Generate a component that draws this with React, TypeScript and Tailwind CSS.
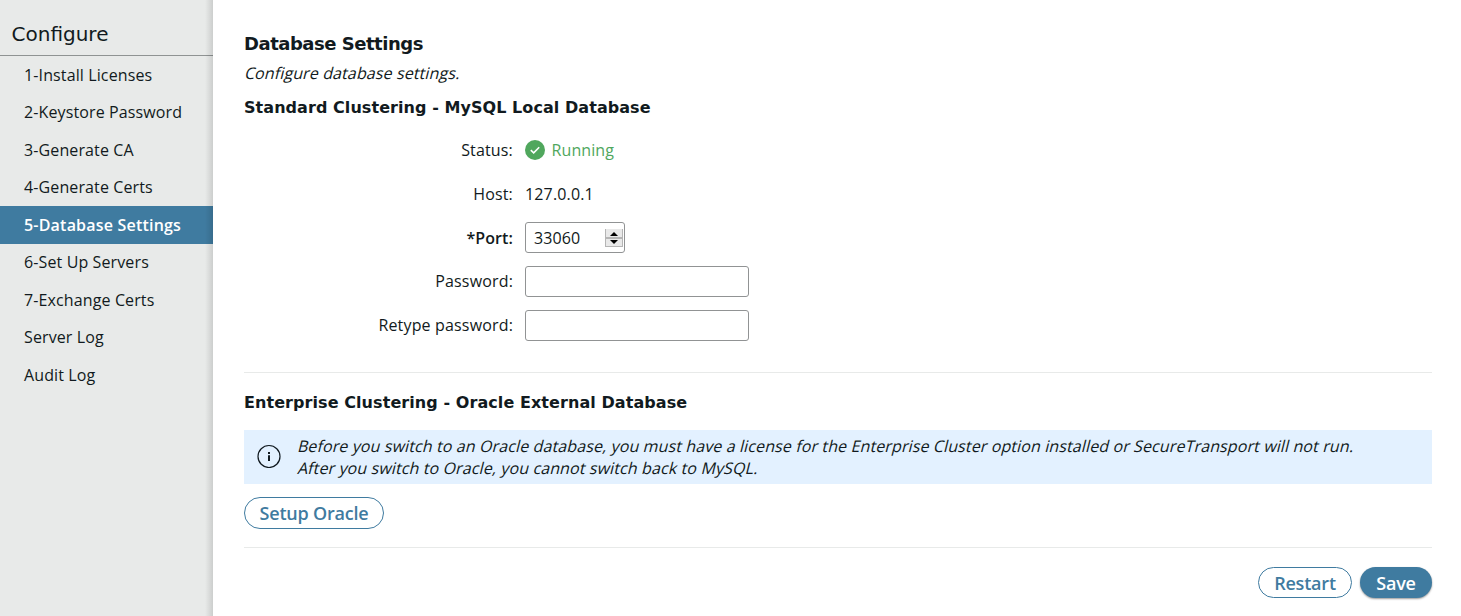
import React from "react";

const navItems = [
  "1-Install Licenses",
  "2-Keystore Password",
  "3-Generate CA",
  "4-Generate Certs",
  "5-Database Settings",
  "6-Set Up Servers",
  "7-Exchange Certs",
  "Server Log",
  "Audit Log",
];

function Sidebar() {
  return (
    <nav className="relative w-[213px] shrink-0 bg-[#e8eae9]">
      <h1 className="h-14 border-b border-[#8f9393] pl-[11.5px] pt-[19px] font-['DejaVu_Sans',sans-serif] text-[20px] leading-[30px]">
        Configure
      </h1>
      <ul>
        {navItems.map((item, index) => (
          <li
            key={item}
            className={
              index === 4
                ? "flex h-[37.5px] items-center bg-[#3f7ba0] pl-6 font-semibold tracking-[0.2px] text-white"
                : "flex h-[37.5px] items-center pl-6 tracking-[0.12px]"
            }
          >
            {item}
          </li>
        ))}
      </ul>
      <div className="pointer-events-none absolute inset-y-0 right-0 w-2 bg-gradient-to-r from-transparent to-black/12" />
    </nav>
  );
}

function Slanted({ children }: { children: React.ReactNode }) {
  return <span className="block w-max origin-[0_75%] transform-[skewX(-14deg)] tracking-[0.115px]">{children}</span>;
}

function Row({ label, bold, children }: { label: string; bold?: boolean; children?: React.ReactNode }) {
  return (
    <div className="flex h-11 items-center">
      <span className={bold ? "w-[269px] pt-px text-right font-semibold tracking-[0.1px]" : "w-[269px] text-right tracking-[0.16px]"}>{label}</span>
      <div className="ml-3 flex items-center">{children}</div>
    </div>
  );
}

function Spinner() {
  return (
    <svg width="18" height="18" viewBox="0 0 18 18" shapeRendering="crispEdges">
      <rect width="18" height="18" fill="#e9e9e9" />
      <path d="M0 0H1V18H0ZM17 0H18V18H17ZM0 8H18V10H0ZM0 17H18V18H0Z" fill="#b5b5b5" />
      <path d="M5 7L9 3L13 7ZM5 11H13L9 15Z" fill="#000" shapeRendering="auto" />
    </svg>
  );
}

export default function App() {
  return (
    <div className="flex h-[616px] w-[1461px] overflow-hidden bg-white font-['Open_Sans',sans-serif] text-[16px] leading-[22px] text-[#111a20]">
      <Sidebar />
      <main className="flex-1 pl-[31px] pr-[29px] pt-[32px]">
        <h2 className="h-[30px] font-['DejaVu_Sans',sans-serif] text-[18px] font-bold leading-[24px] tracking-[-0.48px]">
          <span>Database Settings</span>
        </h2>
        <p>
          <Slanted>Configure database settings.</Slanted>
        </p>
        <h3 className="mt-[13px] font-['DejaVu_Sans',sans-serif] text-[16px] font-bold leading-[22px] tracking-[0.06px]">
          <span>Standard Clustering - MySQL Local Database</span>
        </h3>
        <div className="mt-[9px]">
          <Row label="Status:">
            <svg width="20" height="20" viewBox="0 0 20 20">
              <circle cx="10" cy="10" r="10" fill="#50a75d" />
              <path d="M5.8 10.1L8.7 12.8L14.2 7.3" fill="none" stroke="#fff" strokeWidth="1.6" />
            </svg>
            <span className="ml-[6.5px] tracking-[0.1px] text-[#50a75d]">Running</span>
          </Row>
          <Row label="Host:">
            <span className="tracking-[0.15px]">127.0.0.1</span>
          </Row>
          <div className="-mt-px">
            <Row label="*Port:" bold>
              <div className="flex h-[31px] w-[100px] items-center justify-between rounded-[3px] border border-[#919394] pl-2 pr-px pt-px tracking-[0.1px]">
                33060
                <Spinner />
              </div>
            </Row>
            <Row label="Password:">
              <div className="h-[31px] w-[224px] rounded-[3px] border border-[#919394]" />
            </Row>
            <Row label="Retype password:">
              <div className="h-[31px] w-[224px] rounded-[3px] border border-[#919394]" />
            </Row>
          </div>
        </div>
        <div className="mt-[25px] border-t border-[#e8eae9]" />
        <h3 className="mt-[19px] font-['DejaVu_Sans',sans-serif] text-[16px] font-bold leading-[22px] tracking-[0.07px]">
          <span>Enterprise Clustering - Oracle External Database</span>
        </h3>
        <div className="mt-4 flex h-[54px] items-center bg-[#e3f1ff] pl-[13px]">
          <svg className="-mt-0.5" width="24" height="24" viewBox="0 0 24 24" fill="none" stroke="#111a20">
            <circle cx="12" cy="12.5" r="11" strokeWidth="1.2" />
            <path d="M12 8V10M12 11.2V17" strokeWidth="2" />
          </svg>
          <div className="ml-[15.5px] whitespace-nowrap">
            <Slanted>Before you switch to an Oracle database, you must have a license for the Enterprise Cluster option installed or SecureTransport will not run.</Slanted>
            <Slanted>After you switch to Oracle, you cannot switch back to MySQL.</Slanted>
          </div>
        </div>
        <button className="mt-[13px] block h-8 w-[140px] rounded-full border border-[#3f7ba0] text-[18px] font-semibold tracking-[-0.22px] text-[#3f7ba0]">
          Setup Oracle
        </button>
        <div className="mt-[18px] border-t border-[#e8eae9]" />
        <div className="mt-[19px] flex justify-end gap-2">
          <button className="h-[31px] w-[94px] rounded-full border border-[#3f7ba0] text-[18px] font-semibold tracking-[-0.2px] text-[#3f7ba0]">
            Restart
          </button>
          <button className="h-[31px] w-[72px] rounded-full bg-[#3f7ba0] text-[18px] font-semibold tracking-[-0.2px] text-white shadow-[0_1px_2px_rgba(0,0,0,0.4)]">
            Save
          </button>
        </div>
      </main>
    </div>
  );
}
